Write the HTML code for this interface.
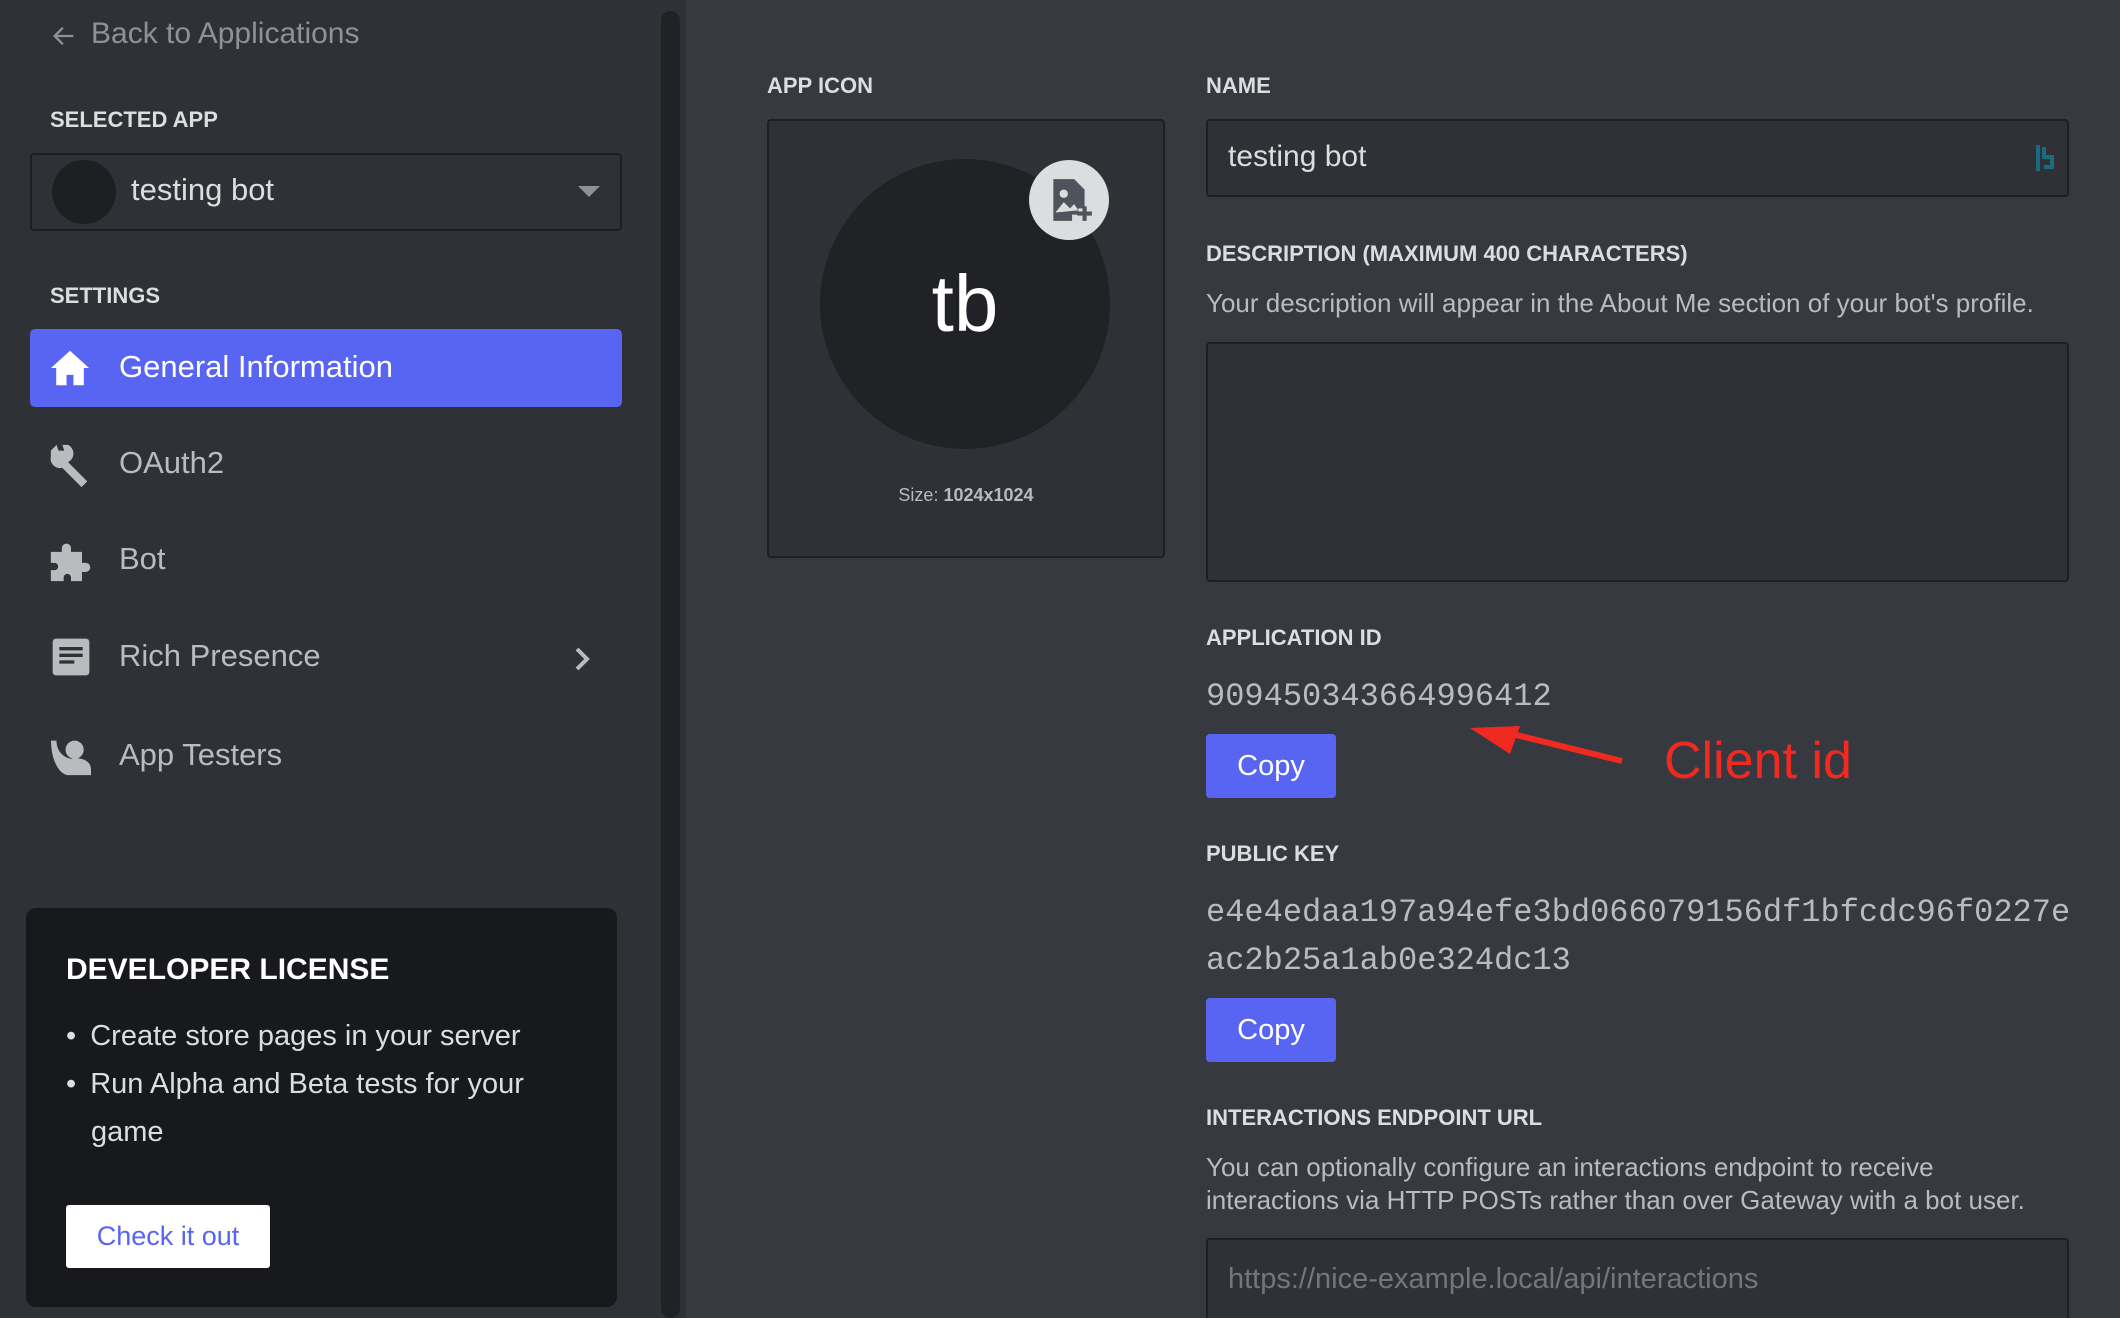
<!DOCTYPE html>
<html style="overflow:hidden"><head><meta charset="utf-8"><style>
*{margin:0;padding:0;box-sizing:border-box}
html,body{width:2120px;height:1318px;overflow:hidden}
body{background:#36393f;font-family:"Liberation Sans",sans-serif;position:relative}
.a{position:absolute;white-space:nowrap}
.side{position:absolute;left:0;top:0;width:686px;height:1318px;background:#2f3136}
.lbl{font-weight:bold;font-size:22px;color:#dcddde}
.nav{font-size:31px;color:#b9bbbe}
.mono{font-family:"Liberation Mono",monospace;color:#b9bbbe}
.btn{position:absolute;background:#5865f2;border-radius:4px;color:#fff;font-size:29px;display:flex;align-items:center;justify-content:center}
.inp{position:absolute;background:#303136;border:2px solid #1e1f22;border-radius:4px}
</style></head><body>
<div class="side"></div>
<div class="a" style="left:661px;top:11px;width:19px;height:1307px;background:#202225;border-radius:10px"></div>

<svg class="a" style="left:50px;top:22px" width="28" height="28" viewBox="0 0 24 24"><path d="M20 12H5M11 5l-7 7 7 7" stroke="#8e9297" stroke-width="2" fill="none"/></svg>
<div class="a" style="left:91px;top:17px;font-size:30px;color:#8e9297">Back to Applications</div>

<div class="a lbl" style="left:50px;top:107px">SELECTED APP</div>
<div class="a" style="left:30px;top:153px;width:592px;height:78px;border:2px solid #1e1f22;border-radius:4px;background:#2f3136"></div>
<div class="a" style="left:52px;top:160px;width:64px;height:64px;border-radius:50%;background:#1e1f22"></div>
<div class="a" style="left:131px;top:172px;font-size:31px;color:#dcddde">testing bot</div>
<svg class="a" style="left:578px;top:186px" width="22" height="12"><path d="M0 0h22L11 11z" fill="#8e9297"/></svg>

<div class="a lbl" style="left:50px;top:283px">SETTINGS</div>
<div class="a" style="left:30px;top:329px;width:592px;height:78px;background:#5865f2;border-radius:5px"></div>
<svg class="a" style="left:49px;top:349px" width="42" height="38" viewBox="0 0 24 22"><path d="M12 1L1 11h3v10h6v-6h4v6h6V11h3z" fill="#fff"/></svg>
<div class="a nav" style="left:119px;top:349px;color:#fff">General Information</div>

<svg class="a" style="left:47px;top:443px" width="46" height="46" viewBox="0 0 24 24"><path d="M2 4l3-3 1 3 3 0-1-3 3 0a5 5 0 0 1 0 9l10 10-3 3-10-10a5 5 0 0 1-6-6z" fill="#b9bbbe"/></svg>
<div class="a nav" style="left:119px;top:445px">OAuth2</div>

<svg class="a" style="left:49px;top:539px" width="44" height="44" viewBox="0 0 24 24"><path d="M1 7h6V5a2.5 2.5 0 0 1 5 0v2h6v6h2a2.5 2.5 0 0 1 0 5h-2v5h-6v-2a2 2 0 0 0-4 0v2H1v-6h2a2 2 0 0 0 0-4H1z" fill="#b9bbbe"/></svg>
<div class="a nav" style="left:119px;top:541px">Bot</div>

<svg class="a" style="left:51px;top:637px" width="40" height="40" viewBox="0 0 24 24"><rect x="1" y="1" width="22" height="22" rx="2" fill="#b9bbbe"/><path d="M5 7h14M5 11h14M5 15h9" stroke="#2f3136" stroke-width="2"/></svg>
<div class="a nav" style="left:119px;top:638px">Rich Presence</div>
<svg class="a" style="left:574px;top:646px" width="16" height="26"><path d="M3 3l10 10-10 10" stroke="#b9bbbe" stroke-width="4" fill="none"/></svg>

<svg class="a" style="left:49px;top:737px" width="44" height="40" viewBox="0 0 24 22"><circle cx="14" cy="7" r="5" fill="#b9bbbe"/><path d="M1 2l3 0c0 5 3 9 8 10 4-1 11 0 11 6v3H10C5 20 1 12 1 2z" fill="#b9bbbe"/></svg>
<div class="a nav" style="left:119px;top:737px">App Testers</div>

<div class="a" style="left:26px;top:908px;width:591px;height:399px;background:#18191c;border-radius:10px"></div>
<div class="a" style="left:66px;top:953px;font-size:30px;font-weight:bold;color:#fff">DEVELOPER LICENSE</div>
<div class="a" style="left:66px;top:1012px;font-size:29px;color:#dcddde;line-height:48px">• <span style="margin-left:6px">Create store pages in your server</span><br>• <span style="margin-left:6px">Run Alpha and Beta tests for your</span><br><span style="margin-left:25px">game</span></div>
<div class="a" style="left:66px;top:1205px;width:204px;height:63px;background:#fff;border-radius:3px;color:#5865f2;font-size:27px;display:flex;align-items:center;justify-content:center">Check it out</div>

<!-- main -->
<div class="a lbl" style="left:767px;top:73px">APP ICON</div>
<div class="inp" style="left:767px;top:119px;width:398px;height:439px;background:#2f3136"></div>
<div class="a" style="left:820px;top:159px;width:290px;height:290px;border-radius:50%;background:#202225;color:#fff;font-size:80px;display:flex;align-items:center;justify-content:center">tb</div>
<div class="a" style="left:1029px;top:160px;width:80px;height:80px;border-radius:50%;background:#dcddde"></div>
<svg class="a" style="left:1045px;top:175px" width="50" height="50" viewBox="0 0 24 24"><path d="M4 2h10l5 5v9h-3v3h-3v3H4z" fill="#4f545c"/><circle cx="9" cy="9" r="2" fill="#dcddde"/><path d="M5 18l4-5 3 3 2-2 2 3z" fill="#dcddde"/><path d="M19 15v7M15.5 18.5h7" stroke="#4f545c" stroke-width="2"/></svg>
<div class="a" style="left:767px;top:485px;width:398px;text-align:center;font-size:18px;color:#b9bbbe">Size: <b>1024x1024</b></div>

<div class="a lbl" style="left:1206px;top:73px">NAME</div>
<div class="inp" style="left:1206px;top:119px;width:863px;height:78px"></div>
<div class="a" style="left:1228px;top:140px;font-size:30px;color:#dcddde">testing bot</div>
<svg class="a" style="left:2035px;top:143px" width="22" height="30"><path d="M3 2v26M9 4v10h8v10H9" stroke="#1b6b80" stroke-width="4" fill="none"/></svg>

<div class="a lbl" style="left:1206px;top:241px">DESCRIPTION (MAXIMUM 400 CHARACTERS)</div>
<div class="a" style="left:1206px;top:288px;font-size:26px;color:#b9bbbe">Your description will appear in the About Me section of your bot's profile.</div>
<div class="inp" style="left:1206px;top:342px;width:863px;height:240px"></div>

<div class="a lbl" style="left:1206px;top:625px">APPLICATION ID</div>
<div class="a mono" style="left:1206px;top:678px;font-size:32px">909450343664996412</div>
<div class="btn" style="left:1206px;top:734px;width:130px;height:64px">Copy</div>

<svg class="a" style="left:1460px;top:715px" width="180" height="60"><path d="M162 46L40 16" stroke="#f02a20" stroke-width="6"/><path d="M10 13l50-2-10 28z" fill="#f02a20"/></svg>
<div class="a" style="left:1664px;top:731px;font-size:52px;color:#f02a20">Client id</div>

<div class="a lbl" style="left:1206px;top:841px">PUBLIC KEY</div>
<div class="a mono" style="left:1206px;top:889px;font-size:32px;line-height:48px">e4e4edaa197a94efe3bd066079156df1bfcdc96f0227e<br>ac2b25a1ab0e324dc13</div>
<div class="btn" style="left:1206px;top:998px;width:130px;height:64px">Copy</div>

<div class="a lbl" style="left:1206px;top:1105px">INTERACTIONS ENDPOINT URL</div>
<div class="a" style="left:1206px;top:1151px;font-size:26px;color:#b9bbbe;line-height:33px">You can optionally configure an interactions endpoint to receive<br>interactions via HTTP POSTs rather than over Gateway with a bot user.</div>
<div class="inp" style="left:1206px;top:1238px;width:863px;height:80px;border-bottom:none;border-radius:4px 4px 0 0"></div>
<div class="a" style="left:1228px;top:1263px;font-size:29px;color:#72767d">https://nice-example.local/api/interactions</div>
</body></html>
